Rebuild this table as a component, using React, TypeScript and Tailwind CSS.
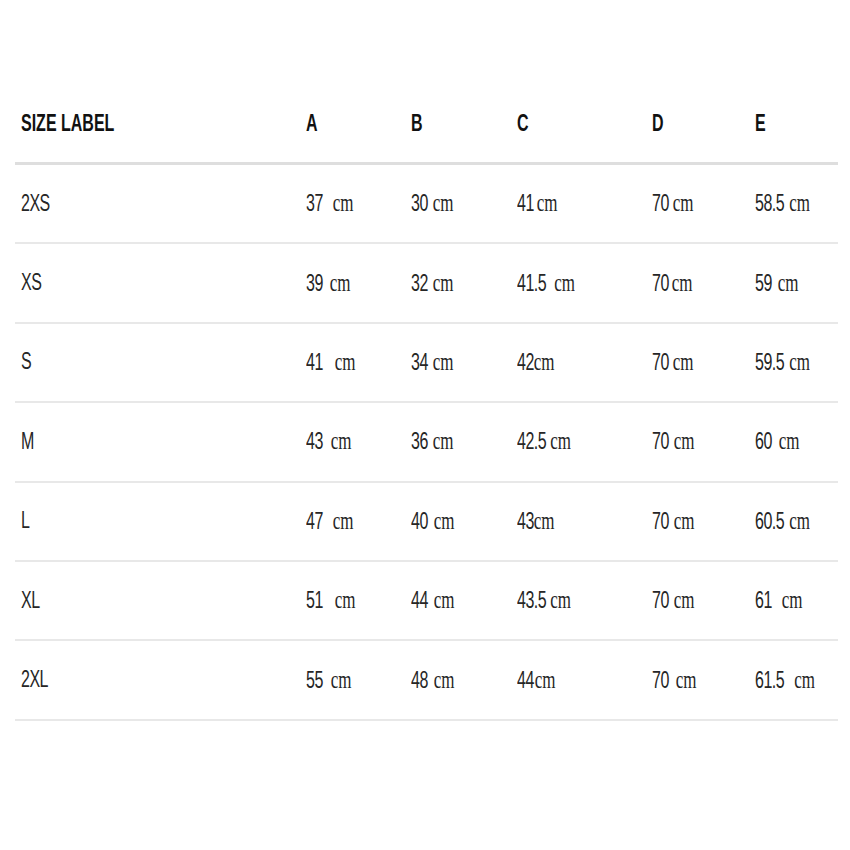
const HEADERS = ['SIZE LABEL', 'A', 'B', 'C', 'D', 'E'];

// [value, gap class before "cm"]
type Cell = [string, string];

const ROWS: { size: string; cells: Cell[] }[] = [
  { size: '2XS', cells: [['37', 'ml-[10px]'], ['30', 'ml-[5px]'], ['41', 'ml-[3px]'], ['70', 'ml-[4px]'], ['58.5', 'ml-[5px]']] },
  { size: 'XS', cells: [['39', 'ml-[7px]'], ['32', 'ml-[5px]'], ['41.5', 'ml-[8px]'], ['70', 'ml-[3px]'], ['59', 'ml-[6px]']] },
  { size: 'S', cells: [['41', 'ml-[12px]'], ['34', 'ml-[5px]'], ['42', 'ml-0'], ['70', 'ml-[4px]'], ['59.5', 'ml-[5px]']] },
  { size: 'M', cells: [['43', 'ml-[8px]'], ['36', 'ml-[5px]'], ['42.5', 'ml-[4px]'], ['70', 'ml-[5px]'], ['60', 'ml-[7px]']] },
  { size: 'L', cells: [['47', 'ml-[10px]'], ['40', 'ml-[6px]'], ['43', 'ml-0'], ['70', 'ml-[5px]'], ['60.5', 'ml-[5px]']] },
  { size: 'XL', cells: [['51', 'ml-[12px]'], ['44', 'ml-[6px]'], ['43.5', 'ml-[4px]'], ['70', 'ml-[5px]'], ['61', 'ml-[10px]']] },
  { size: '2XL', cells: [['55', 'ml-[8px]'], ['48', 'ml-[6px]'], ['44', 'ml-[1px]'], ['70', 'ml-[7px]'], ['61.5', 'ml-[10px]']] },
];

const GRID = 'grid grid-cols-[285px_105px_106px_135px_103px_1fr] pl-[6px]';

export default function App() {
  return (
    <div className="w-[850px] h-[850px] bg-white pt-[83px] px-[15px] text-[#262626] font-['Liberation_Sans',Arial,sans-serif]">
      <div className="w-[823px]">
        {/* Header */}
        <div className={`${GRID} h-[82px] items-center border-b-[3px] border-[#dedede]`}>
          {HEADERS.map((h) => (
            <div key={h} className="text-[16px] font-bold leading-none origin-left scale-y-[1.55] whitespace-nowrap text-[#111]">
              {h}
            </div>
          ))}
        </div>

        {/* Rows */}
        {ROWS.map((row) => (
          <div key={row.size} className={`${GRID} h-[79.4px] items-center border-b-2 border-[#e8e8e8]`}>
            <div className="text-[16px] leading-none origin-left scale-y-[1.45] tracking-[-0.5px]">{row.size}</div>
            {row.cells.map(([num, gap], i) => (
              <div key={i} className="flex items-baseline whitespace-nowrap origin-left scale-y-[1.45] leading-none">
                <span className="text-[16px] tracking-[-0.5px]">{num}</span>
                <span className={`${gap} text-[17px] font-['Liberation_Serif',serif]`}>cm</span>
              </div>
            ))}
          </div>
        ))}
      </div>
    </div>
  );
}
